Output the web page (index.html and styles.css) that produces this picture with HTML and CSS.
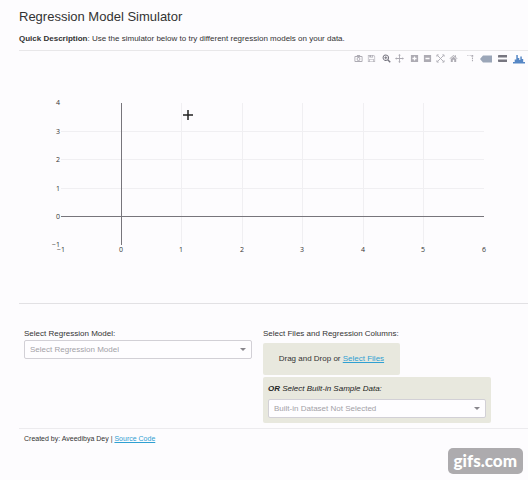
FILE: index.html
```html
<!DOCTYPE html>
<html lang="en">
<head>
<meta charset="utf-8">
<title>Regression Model Simulator</title>
<link rel="stylesheet" href="styles.css">
</head>
<body>
<main class="page">
  <header class="intro">
    <h1>Regression Model Simulator</h1>
    <p><strong>Quick Description</strong>: Use the simulator below to try different regression models on your data.</p>
  </header>

  <section class="plot">
    <div class="modebar">
      <div class="group">
        <button type="button" aria-label="Download plot"><svg viewBox="0 0 10 10"><path fill-rule="evenodd" d="M1.500 2.200h1.400l.7-1h2.800l.7 1h1.400q1 0 1 1v4.600q0 1-1 1h-7q-1 0-1-1V3.200q0-1 1-1zM1.500 3.200v4.600h7V3.200zM5 3.400a2.100 2.100 0 1 1 0 4.200a2.100 2.100 0 1 1 0-4.200zM5 4.400a1.100 1.100 0 1 0 0 2.200a1.100 1.100 0 1 0 0-2.200z"/></svg></button>
        <button type="button" aria-label="Save and edit"><svg viewBox="0 0 10 10"><path fill-rule="evenodd" d="M1 1h6.500L9 2.500V9H1zM1.700 1.700v6.600h.8V5.500h5v2.800h.8V2.800L7.200 1.700H6.800V4H2.600V1.700zM4.800 1.700v1.500h1V1.700zM3.200 6.200v2.100h3.600V6.200z"/></svg></button>
      </div>
      <div class="group">
        <button type="button" class="active" aria-label="Zoom"><svg viewBox="0 0 10 10"><path fill-rule="evenodd" d="M4.200.500a3.600 3.600 0 0 1 3 5.600L9.700 8.600l-1.100 1.100L6.100 7.200A3.600 3.600 0 1 1 4.200.500zM4.200 1.600a2.500 2.500 0 1 0 0 5a2.500 2.500 0 1 0 0-5zM3.700 2.500h1v1.100h1.100v1H4.700v1.100h-1V4.600H2.600v-1h1.100z"/></svg></button>
        <button type="button" aria-label="Pan"><svg viewBox="0 0 10 10"><path d="M5 0l1.500 1.800H5.500v2.700h2.700V3.500L10 5 8.200 6.500V5.500H5.500v2.700h1L5 10 3.500 8.200h1V5.500H1.800v1L0 5l1.800-1.500v1h2.700V1.800H3.500z"/></svg></button>
      </div>
      <div class="group">
        <button type="button" aria-label="Zoom in"><svg viewBox="0 0 10 10"><path fill-rule="evenodd" d="M1 1h8v8H1zM4.300 2.700v1.600H2.700v1.400h1.600v1.600h1.400V5.700h1.600V4.300H5.700V2.700z"/></svg></button>
        <button type="button" aria-label="Zoom out"><svg viewBox="0 0 10 10"><path fill-rule="evenodd" d="M1 1h8v8H1zM2.700 4.300v1.400h4.600V4.300z"/></svg></button>
        <button type="button" aria-label="Autoscale"><svg viewBox="0 0 10 10"><path class="line" d="M1 3V1h2M7 1h2v2M9 7v2H7M3 9H1V7M1.500 1.500l7 7M8.500 1.500l-7 7"/></svg></button>
        <button type="button" aria-label="Reset axes"><svg viewBox="0 0 10 10"><path d="M5 1l1.500 1.400V1.500h1.200v2L9.500 5l-.6.600L5 2.300 1.100 5.600.500 5zM5 3l3 2.600V9H5.800V6.500H4.200V9H2V5.600z"/></svg></button>
      </div>
      <div class="group wide">
        <button type="button" aria-label="Toggle spike lines"><svg viewBox="0 0 10 10"><path d="M1.500 1.300h1.200v1H1.500zM4 1.300h1.200v1H4zM6 1h2v2h-2zM6.600 4h1.200v1.500H6.600zM6.600 6.500h1.200V8H6.600z"/></svg></button>
        <button type="button" class="tag" aria-label="Show closest data on hover"><svg viewBox="0 0 12 10"><path d="M0 5l3-3.500h9v7H3z"/></svg></button>
        <button type="button" class="active" aria-label="Compare data on hover"><svg viewBox="0 0 10 10"><path d="M0 4V2q0-.8.800-.8H10V4zM0 6h10v2.800H.8Q0 8.800 0 8z"/></svg></button>
      </div>
      <div class="group">
        <button type="button" class="brand" aria-label="Produced with Plotly"><svg viewBox="0 0 12 10"><path d="M0 9.500V8h1.700V5.500h1.600V1h1.500v3h1.500v2h1V2.500h1.500V5h1.400v3H12v1.500z"/></svg></button>
      </div>
    </div>
    <svg class="chart" viewBox="0 0 509 220" role="img" aria-label="Empty regression plot">
      <path class="grid" d="M162.500 20v141M223.500 20v141M283.500 20v141M344.500 20v141M404.500 20v141M42 48.500h423M42 76.500h423M42 105.500h423"/>
      <path class="zero" d="M102.500 20v142M42 133.500h423"/>
      <g class="ticks end">
        <text x="41" y="22">4</text><text x="41" y="51">3</text><text x="41" y="79">2</text><text x="41" y="108">1</text><text x="41" y="136">0</text><text x="41" y="164">−1</text>
      </g>
      <g class="ticks middle">
        <text x="42" y="169">−1</text><text x="102" y="169">0</text><text x="162" y="169">1</text><text x="223" y="169">2</text><text x="283" y="169">3</text><text x="344" y="169">4</text><text x="404" y="169">5</text><text x="465" y="169">6</text>
      </g>
      <path class="cursor" d="M169 27v10M164 32h10"/>
    </svg>
  </section>

  <form class="controls">
    <div class="field">
      <label for="model">Select Regression Model:</label>
      <div class="dropdown"><select id="model"><option>Select Regression Model</option></select></div>
    </div>
    <div class="field">
      <span>Select Files and Regression Columns:</span>
      <div class="upload">Drag and Drop or <a href="#">Select Files</a></div>
      <div class="sample">
        <label for="dataset"><strong>OR</strong> Select Built-in Sample Data:</label>
        <div class="dropdown"><select id="dataset"><option>Built-in Dataset Not Selected</option></select></div>
      </div>
    </div>
  </form>

  <footer>Created by: Aveedibya Dey | <a href="#">Source Code</a></footer>
</main>
<div class="watermark">gifs.com</div>
</body>
</html>
```
FILE: styles.css
```css
* { box-sizing: border-box; }
body {
  margin: 0;
  background: #fdfcfe;
  color: #333;
  font: 8px/12px "Liberation Sans", Arial, sans-serif;
}
.page { padding: 8px 0 0 19px; }
h1 { margin: 0; font-size: 13px; font-weight: 400; line-height: 17px; }
.intro { padding-bottom: 5px; }
.intro p { margin: 8px 0 0; }
a { color: #2fa0d2; }

.plot { border-top: 1px solid #e8e7e9; border-bottom: 1px solid #e2e1e4; }
.modebar { display: flex; justify-content: flex-end; gap: 2px; padding: 1px 3px 0 0; }
.group { display: flex; }
.modebar button {
  display: flex; align-items: center; justify-content: center;
  width: 13px; height: 13px; padding: 0; border: 0;
  background: none; color: #adabb3;
}
.modebar .wide button { width: 16px; }
.modebar svg { width: 9px; height: 9px; fill: currentColor; }
.modebar .active { color: #777680; }
.modebar .tag { color: #9ba6b8; }
.modebar .brand { color: #5687c5; }
.modebar .tag svg, .modebar .brand svg { width: 12px; height: 10px; }
.modebar .line { fill: none; stroke: currentColor; }

.chart { display: block; width: 100%; margin-top: 18px; }
.grid { stroke: #f0eff2; }
.zero { stroke: #77757b; }
.cursor { stroke: #222; stroke-width: 1.5; }
.ticks { font: 7px "Open Sans", Verdana, sans-serif; fill: #333; }
.end { text-anchor: end; }
.middle { text-anchor: middle; }

.controls {
  display: grid; grid-template-columns: 1fr 1fr; gap: 11px;
  padding: 24px 37px 5px 5px;
  border-bottom: 1px solid #ecebee;
}
.field > label, .field > span { display: block; }
.dropdown { position: relative; }
.dropdown::after {
  content: ""; position: absolute; right: 6px; top: 8px;
  border: 3px solid transparent; border-top-color: #88868c; border-bottom: 0;
  pointer-events: none;
}
select {
  display: block; width: 100%; height: 19px; padding: 0 5px;
  appearance: none; border: 1px solid #d2d0d6; border-radius: 2px;
  background: #fefdff; color: #a3a1a7; font: inherit;
}
.upload {
  width: 60%; margin-top: 3px; padding: 10px 0;
  border-radius: 2px; background: #e8e8de; text-align: center;
}
.sample { margin-top: 2px; padding: 6px 5px 5px; border-radius: 2px; background: #e8e8de; }
.sample label { display: block; margin-bottom: 4px; color: #222; font-style: italic; }
footer { padding: 4px 5px; font-size: 7px; }
.watermark {
  position: fixed; right: 5px; bottom: 6px;
  padding: 0 6px; border-radius: 5px;
  background: #adabae; color: #fff;
  font: 900 17px/26px Lato, sans-serif;
}
```
